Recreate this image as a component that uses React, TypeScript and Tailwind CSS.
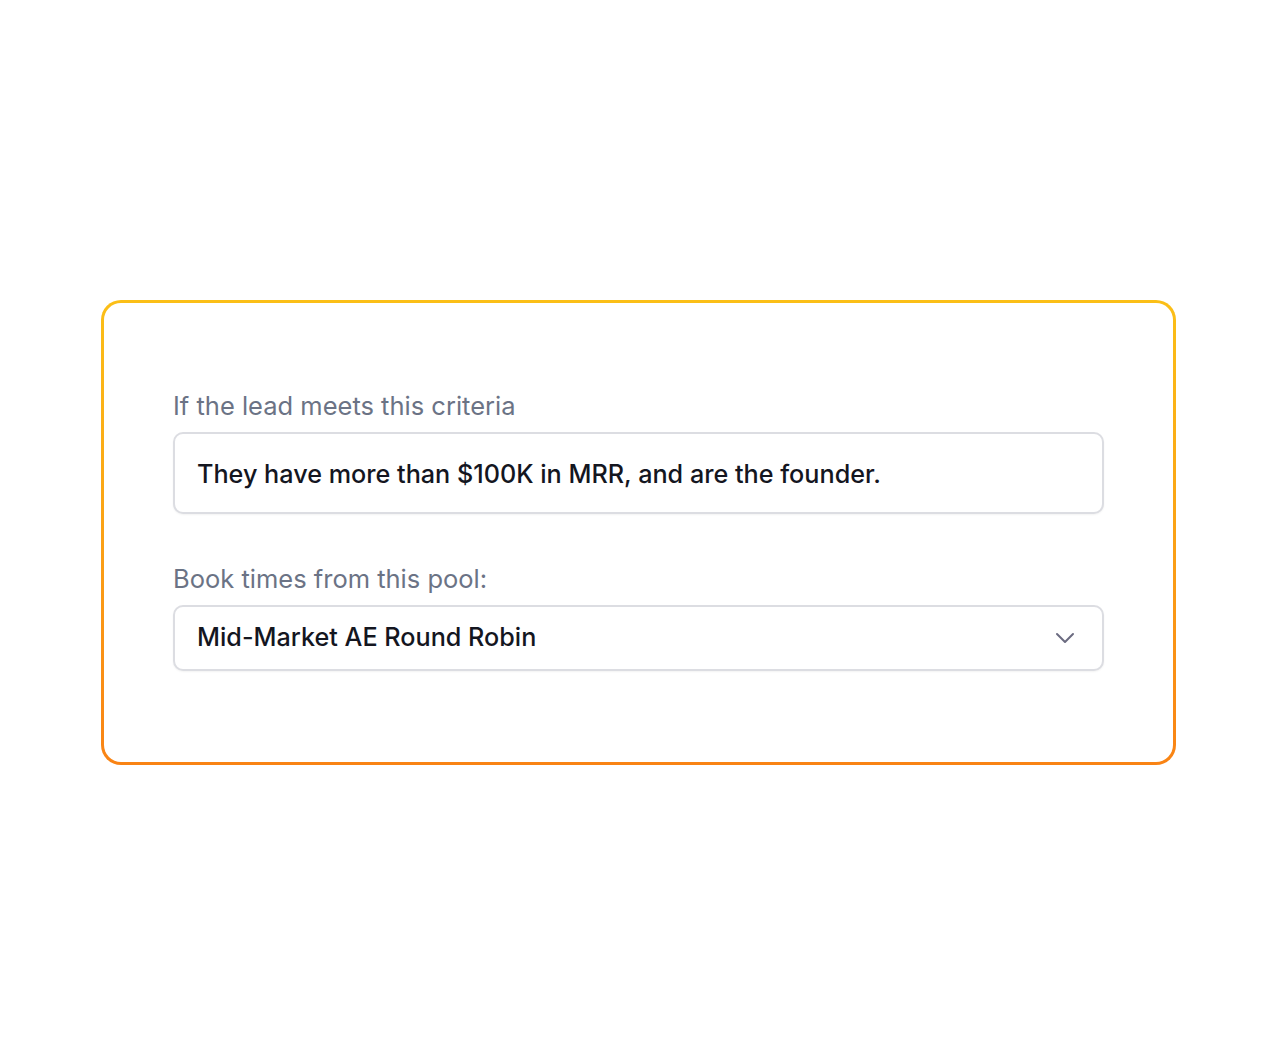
import { ChevronDown } from 'lucide-react';

export default function App() {
  return (
    <div className="min-h-screen bg-white pt-[300px] pl-[101px] font-['Inter',sans-serif]">
      {/* Gradient border card */}
      <div className="w-[1075px] h-[465px] rounded-[20px] p-[3px] bg-gradient-to-b from-[#fbbf17] to-[#f98314]">
        <div className="h-full w-full rounded-[17px] bg-white pt-[87px] px-[69px]">
          <label className="block text-[25.5px] leading-8 text-[#6b7385]">
            If the lead meets this criteria
          </label>
          <div className="mt-[10px] h-[82px] flex items-center rounded-[10px] border-2 border-[#dcdde2] bg-white px-[22px] pt-1 shadow-[0_1px_2px_rgba(0,0,0,0.05)]">
            <span className="text-[25.2px] font-medium text-[#14161f]">
              They have more than $100K in MRR, and are the founder.
            </span>
          </div>

          <label className="mt-[49px] block text-[25.5px] leading-8 text-[#6b7385]">
            Book times from this pool:
          </label>
          <div className="mt-[10px] h-[66px] flex items-center justify-between rounded-[10px] border-2 border-[#dcdde2] bg-white pl-[22px] pr-[21px] shadow-[0_1px_2px_rgba(0,0,0,0.05)]">
            <span className="text-[25.2px] font-medium text-[#14161f]">Mid-Market AE Round Robin</span>
            <ChevronDown className="w-8 h-8 text-[#6b6b80]" strokeWidth={1.5} />
          </div>
        </div>
      </div>
    </div>
  );
}
